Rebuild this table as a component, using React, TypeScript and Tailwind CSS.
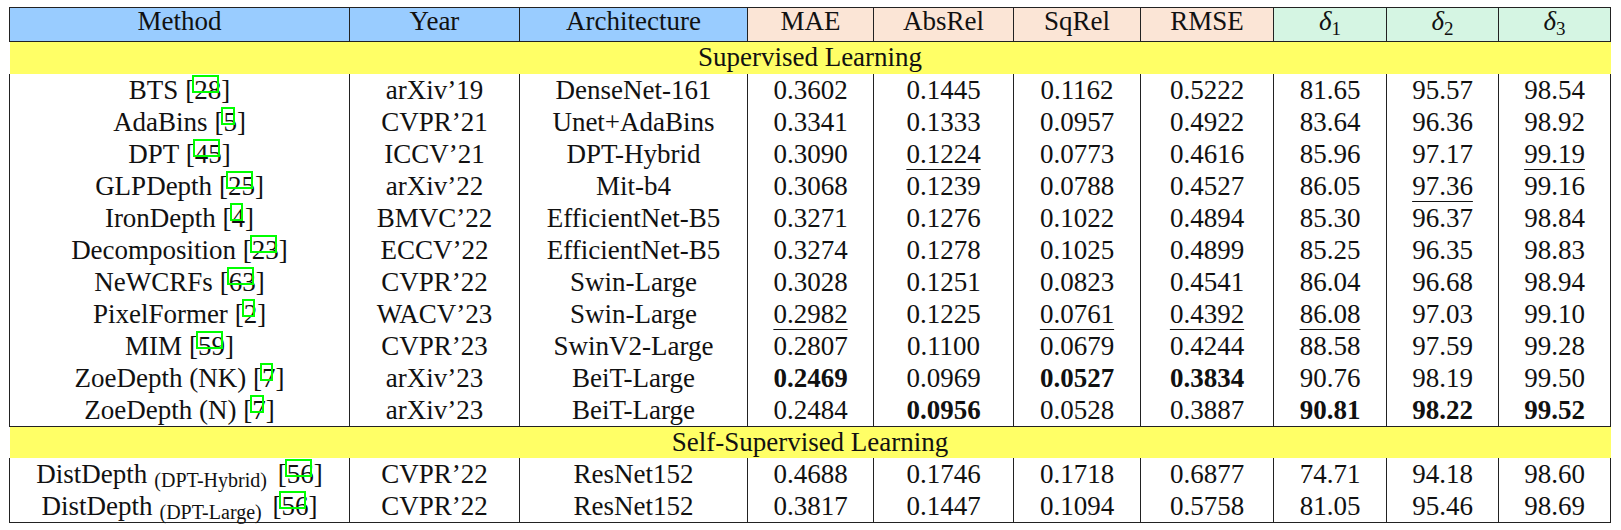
import React from 'react';

type Val = { v: string; b?: boolean; u?: boolean };

interface Row {
  name: string;
  sub?: string;
  cite: string;
  year: string;
  arch: string;
  vals: Val[];
}

const v = (s: string): Val => ({ v: s });
const b = (s: string): Val => ({ v: s, b: true });
const u = (s: string): Val => ({ v: s, u: true });

const supervised: Row[] = [
  { name: 'BTS', cite: '28', year: 'arXiv’19', arch: 'DenseNet-161', vals: [v('0.3602'), v('0.1445'), v('0.1162'), v('0.5222'), v('81.65'), v('95.57'), v('98.54')] },
  { name: 'AdaBins', cite: '5', year: 'CVPR’21', arch: 'Unet+AdaBins', vals: [v('0.3341'), v('0.1333'), v('0.0957'), v('0.4922'), v('83.64'), v('96.36'), v('98.92')] },
  { name: 'DPT', cite: '45', year: 'ICCV’21', arch: 'DPT-Hybrid', vals: [v('0.3090'), u('0.1224'), v('0.0773'), v('0.4616'), v('85.96'), v('97.17'), u('99.19')] },
  { name: 'GLPDepth', cite: '25', year: 'arXiv’22', arch: 'Mit-b4', vals: [v('0.3068'), v('0.1239'), v('0.0788'), v('0.4527'), v('86.05'), u('97.36'), v('99.16')] },
  { name: 'IronDepth', cite: '4', year: 'BMVC’22', arch: 'EfficientNet-B5', vals: [v('0.3271'), v('0.1276'), v('0.1022'), v('0.4894'), v('85.30'), v('96.37'), v('98.84')] },
  { name: 'Decomposition', cite: '23', year: 'ECCV’22', arch: 'EfficientNet-B5', vals: [v('0.3274'), v('0.1278'), v('0.1025'), v('0.4899'), v('85.25'), v('96.35'), v('98.83')] },
  { name: 'NeWCRFs', cite: '63', year: 'CVPR’22', arch: 'Swin-Large', vals: [v('0.3028'), v('0.1251'), v('0.0823'), v('0.4541'), v('86.04'), v('96.68'), v('98.94')] },
  { name: 'PixelFormer', cite: '2', year: 'WACV’23', arch: 'Swin-Large', vals: [u('0.2982'), v('0.1225'), u('0.0761'), u('0.4392'), u('86.08'), v('97.03'), v('99.10')] },
  { name: 'MIM', cite: '59', year: 'CVPR’23', arch: 'SwinV2-Large', vals: [v('0.2807'), v('0.1100'), v('0.0679'), v('0.4244'), v('88.58'), v('97.59'), v('99.28')] },
  { name: 'ZoeDepth (NK)', cite: '7', year: 'arXiv’23', arch: 'BeiT-Large', vals: [b('0.2469'), v('0.0969'), b('0.0527'), b('0.3834'), v('90.76'), v('98.19'), v('99.50')] },
  { name: 'ZoeDepth (N)', cite: '7', year: 'arXiv’23', arch: 'BeiT-Large', vals: [v('0.2484'), b('0.0956'), v('0.0528'), v('0.3887'), b('90.81'), b('98.22'), b('99.52')] },
];

const selfSupervised: Row[] = [
  { name: 'DistDepth', sub: '(DPT-Hybrid)', cite: '56', year: 'CVPR’22', arch: 'ResNet152', vals: [v('0.4688'), v('0.1746'), v('0.1718'), v('0.6877'), v('74.71'), v('94.18'), v('98.60')] },
  { name: 'DistDepth', sub: '(DPT-Large)', cite: '56', year: 'CVPR’22', arch: 'ResNet152', vals: [v('0.3817'), v('0.1447'), v('0.1094'), v('0.5758'), v('81.05'), v('95.46'), v('98.69')] },
];

const widths = [340, 170, 228, 126, 140, 127, 133, 113, 112, 112];

function Cite({ n }: { n: string }) {
  return (
    <span>
      [
      <span className="relative">
        {n}
        <span className="absolute left-[-2px] right-[2px] top-0 h-[18px] border-2 border-[#00ff00]" />
      </span>
      ]
    </span>
  );
}

function Delta({ i }: { i: string }) {
  return (
    <span>
      <span className="italic">δ</span>
      <span className="relative top-[5px] text-[19px] leading-[0]">{i}</span>
    </span>
  );
}

function DataRows({ rows }: { rows: Row[] }) {
  return (
    <>
      {rows.map((r, idx) => {
        const last = idx === rows.length - 1;
        const td = `h-[32px] p-0 align-top leading-[32px] text-center border-x border-[#222] ${last ? 'border-b' : ''}`;
        return (
          <tr key={idx}>
            <td className={td}>
              {r.name}
              {r.sub && <span className="relative top-[4px] ml-[7px] mr-[4px] text-[20px] leading-[0]">{r.sub}</span>} <Cite n={r.cite} />
            </td>
            <td className={td}>{r.year}</td>
            <td className={td}>{r.arch}</td>
            {r.vals.map((c, j) => (
              <td key={j} className={td}>
                <span className={`${c.b ? 'font-bold' : ''} ${c.u ? 'underline decoration-1 underline-offset-[6px]' : ''}`}>{c.v}</span>
              </td>
            ))}
          </tr>
        );
      })}
    </>
  );
}

function Band({ label }: { label: string }) {
  return (
    <tr>
      <td colSpan={10} className="h-[32px] p-0 align-top leading-[30px] text-center bg-[#ffff66] border-t border-[#222]">
        {label}
      </td>
    </tr>
  );
}

export default function App() {
  const hd = 'h-[34px] p-0 pb-[7px] align-top leading-[26px] text-center border border-[#222]';
  return (
    <div className="min-h-screen bg-white pt-[7px] pl-[9px]" style={{ width: 1621, height: 530 }}>
      <table
        className="table-fixed border-collapse text-[27px] text-[#111]"
        style={{ fontFamily: '"Liberation Serif", "Times New Roman", serif', width: 1601 }}
      >
        <colgroup>
          {widths.map((w, i) => (
            <col key={i} style={{ width: w }} />
          ))}
        </colgroup>
        <thead>
          <tr>
            <td className={`${hd} bg-[#99ccff]`}>Method</td>
            <td className={`${hd} bg-[#99ccff]`}>Year</td>
            <td className={`${hd} bg-[#99ccff]`}>Architecture</td>
            <td className={`${hd} bg-[#fbe5d6]`}>MAE</td>
            <td className={`${hd} bg-[#fbe5d6]`}>AbsRel</td>
            <td className={`${hd} bg-[#fbe5d6]`}>SqRel</td>
            <td className={`${hd} bg-[#fbe5d6]`}>RMSE</td>
            <td className={`${hd} bg-[#d5f5e3]`}><Delta i="1" /></td>
            <td className={`${hd} bg-[#d5f5e3]`}><Delta i="2" /></td>
            <td className={`${hd} bg-[#d5f5e3]`}><Delta i="3" /></td>
          </tr>
        </thead>
        <tbody>
          <Band label="Supervised Learning" />
          <DataRows rows={supervised} />
          <Band label="Self-Supervised Learning" />
          <DataRows rows={selfSupervised} />
        </tbody>
      </table>
    </div>
  );
}
